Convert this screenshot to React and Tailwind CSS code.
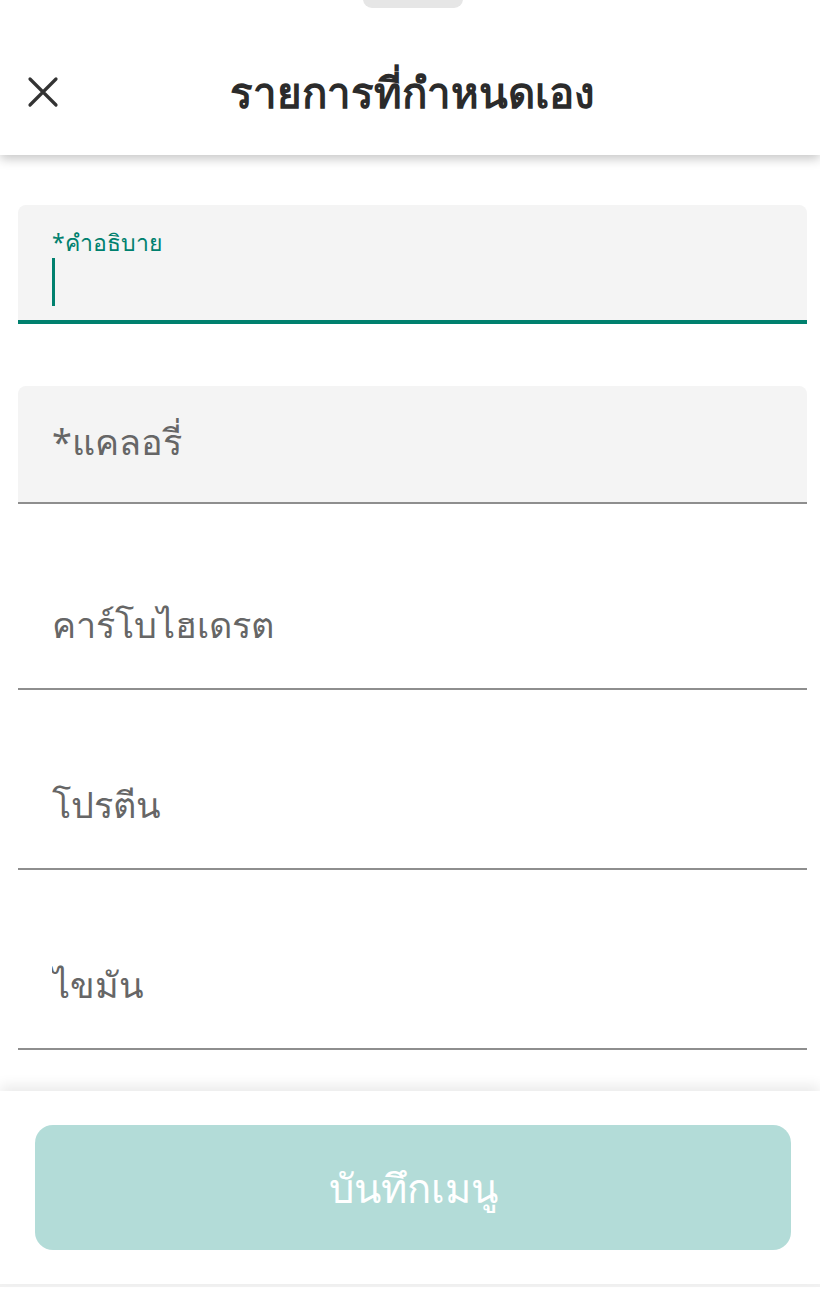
import { useState } from "react";

const fields = [
  { key: "carb", label: "คาร์โบไฮเดรต", gap: "mt-[62px]" },
  { key: "protein", label: "โปรตีน", gap: "mt-[56px]" },
  { key: "fat", label: "ไขมัน", gap: "mt-[56px]" },
];

function CloseIcon() {
  return (
    <svg width="32" height="32" viewBox="0 0 32 32" fill="none">
      <path d="M3 3L29 29M29 3L3 29" stroke="#333" strokeWidth="3.2" strokeLinecap="round" />
    </svg>
  );
}

export default function App() {
  const [desc, setDesc] = useState("");
  const [calories, setCalories] = useState("");

  return (
    <div
      className="relative flex h-[1294px] w-[820px] flex-col overflow-hidden bg-white text-[#333]"
      style={{ fontFamily: '"Noto Sans", "Open Sans", Roboto, sans-serif' }}
    >
      {/* drag handle */}
      <div className="absolute left-[363px] top-[-10px] z-20 h-[18px] w-[100px] rounded-full bg-[#e6e6e6]" />

      <header className="relative z-10 flex h-[155px] shrink-0 items-center bg-white pl-[27px] pr-[26px] pt-[28px] shadow-[0_4px_10px_rgba(0,0,0,0.22)]">
        <button type="button" className="flex h-[32px] w-[32px] items-center justify-center">
          <CloseIcon />
        </button>
        <h1 className="flex-1 pr-[29px] text-center text-[42px] font-bold leading-none text-[#2b2b2b]">
          รายการที่กำหนดเอง
        </h1>
      </header>

      <main className="flex flex-1 flex-col pl-[18px] pr-[13px] pt-[50px]">
        <div className="h-[119px] rounded-t-[8px] border-b-[4px] border-[#00806e] bg-[#f4f4f4] px-[34px] pt-[22px]">
          <p className="text-[23px] leading-[30px] text-[#00806e]">*คำอธิบาย</p>
          <div className="flex h-[50px] items-center">
            <span className="h-[48px] w-[3px] bg-[#00806e]" />
            <input
              value={desc}
              onChange={(e) => setDesc(e.target.value)}
              className="flex-1 bg-transparent text-[32px] outline-none"
            />
          </div>
        </div>

        <div className="mt-[62px] flex h-[118px] items-center rounded-t-[8px] border-b-[2px] border-[#8e8e8e] bg-[#f4f4f4] px-[34px] pb-[4px]">
          <input
            value={calories}
            onChange={(e) => setCalories(e.target.value)}
            placeholder="*แคลอรี่"
            className="w-full bg-transparent text-[36px] text-[#555] placeholder:text-[#666] outline-none"
          />
        </div>

        {fields.map((f) => (
          <div key={f.key} className={`${f.gap} flex h-[124px] items-center border-b-[2px] border-[#8e8e8e] px-[34px] pb-[4px]`}>
            <input
              placeholder={f.label}
              className="w-full bg-transparent text-[36px] text-[#555] placeholder:text-[#666] outline-none"
            />
          </div>
        ))}
      </main>

      <footer className="relative z-10 shrink-0 bg-white pb-[34px] pl-[35px] pr-[29px] pt-[34px] shadow-[0_-6px_12px_rgba(0,0,0,0.08)]">
        <button
          type="button"
          disabled
          className="flex h-[125px] w-full items-center justify-center rounded-[18px] bg-[#b3dcd8] text-[40px] text-white"
        >
          บันทึกเมนู
        </button>
      </footer>
      <div className="h-[10px] shrink-0 border-t-[3px] border-[#f2f2f2] bg-white" />
    </div>
  );
}
